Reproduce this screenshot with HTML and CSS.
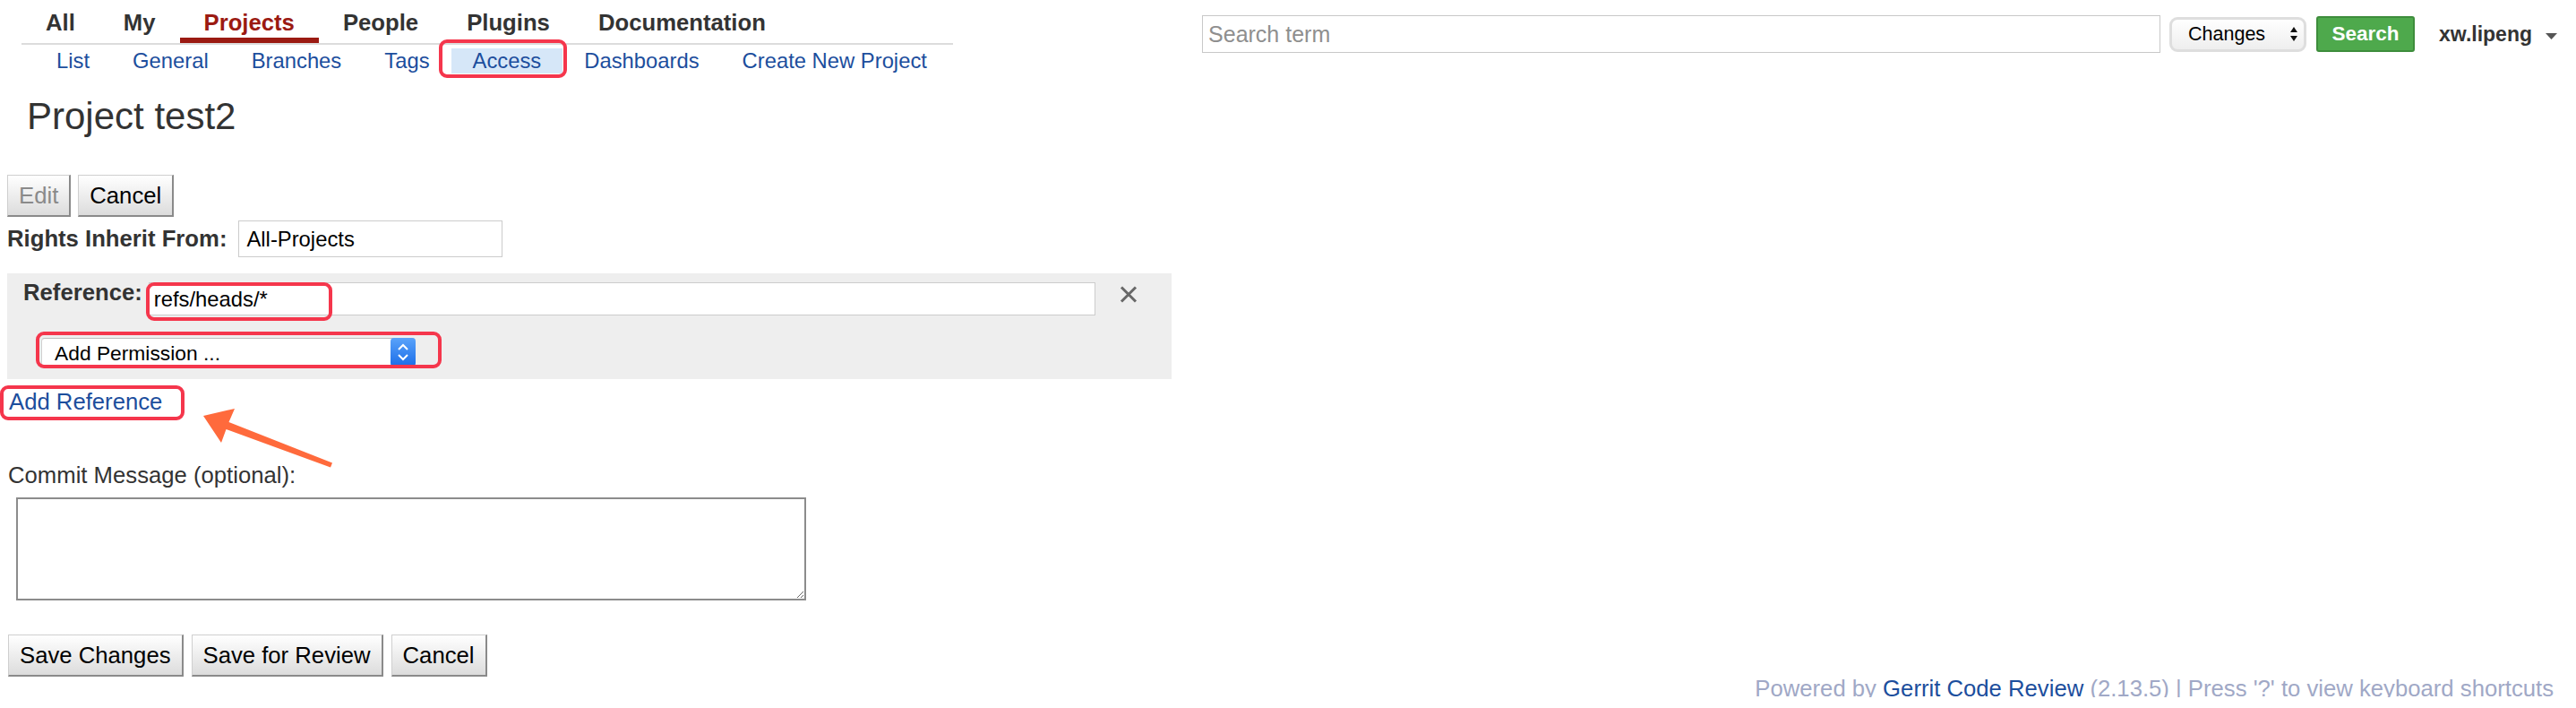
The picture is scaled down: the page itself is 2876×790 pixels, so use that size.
FILE: index.html
```html
<!DOCTYPE html>
<html lang="en">
<head>
<meta charset="utf-8">
<title>Project test2 - Access</title>
<link rel="stylesheet" href="styles.css">
</head>
<body>
<header class="topbar">
  <nav class="menus">
    <ul class="tabs">
      <li class="tab">All</li>
      <li class="tab">My</li>
      <li class="tab active">Projects</li>
      <li class="tab">People</li>
      <li class="tab">Plugins</li>
      <li class="tab">Documentation</li>
    </ul>
    <ul class="subtabs">
      <li class="subtab">List</li>
      <li class="subtab">General</li>
      <li class="subtab">Branches</li>
      <li class="subtab">Tags</li>
      <li class="subtab current">Access<span class="mark mark-access"></span></li>
      <li class="subtab">Dashboards</li>
      <li class="subtab">Create New Project</li>
    </ul>
  </nav>
  <div class="search">
    <input class="search-input" type="text" placeholder="Search term">
    <div class="scope">
      <span>Changes</span>
      <svg class="updown" width="10" height="20" viewBox="0 0 10 20"><path d="M5 2 L9 8 L1 8 Z" fill="#111"/><path d="M1 12 L9 12 L5 18 Z" fill="#111"/></svg>
    </div>
    <button class="go" type="button">Search</button>
    <span class="user">xw.lipeng</span>
    <svg class="caret" width="13" height="7" viewBox="0 0 13 7"><path d="M0 0 L13 0 L6.5 7 Z" fill="#555"/></svg>
  </div>
</header>

<main class="content">
  <h1 class="title">Project test2</h1>

  <div class="actions">
    <button class="btn" type="button" disabled>Edit</button>
    <button class="btn" type="button">Cancel</button>
  </div>

  <div class="inherit">
    <label class="inherit-label">Rights Inherit From:</label>
    <input class="inherit-input" type="text" value="All-Projects">
  </div>

  <section class="panel">
    <div class="ref-row">
      <span class="ref-label">Reference:</span>
      <div class="ref-field">
        <input class="ref-input" type="text" value="refs/heads/*">
        <span class="mark mark-ref"></span>
      </div>
      <svg class="remove" width="20" height="19" viewBox="0 0 20 19"><path d="M2 1.5 L18 17.5 M18 1.5 L2 17.5" stroke="#676767" stroke-width="3" fill="none"/></svg>
    </div>
    <div class="perm-row">
      <div class="perm-select">
        <span class="perm-text">Add Permission ...</span>
        <span class="perm-arrow"><svg width="28" height="32" viewBox="0 0 28 32"><path d="M9 13 L14 8 L19 13 M9 19 L14 24 L19 19" stroke="#fff" stroke-width="2" fill="none"/></svg></span>
      </div>
      <span class="mark mark-perm"></span>
    </div>
  </section>

  <div class="add-ref-row">
    <a class="add-ref">Add Reference<span class="mark mark-add"></span></a>
  </div>

  <div class="commit-label">Commit Message (optional):</div>
  <textarea class="commit-box"></textarea>

  <div class="actions actions-bottom">
    <button class="btn" type="button">Save Changes</button>
    <button class="btn" type="button">Save for Review</button>
    <button class="btn" type="button">Cancel</button>
  </div>
</main>

<footer class="footer">
  Powered by <a class="footer-link">Gerrit Code Review</a> (2.13.5) | Press '?' to view keyboard shortcuts
  <span class="watermark">CSDN @锦洪</span>
</footer>

<svg class="pointer" width="160" height="80" viewBox="220 450 160 80">
  <polygon points="227,464 262,456 255.5,471 371,516.5 369,521.5 252.5,479 247,494" fill="#ff6a3c"/>
</svg>
</body>
</html>
```

FILE: styles.css
```css
* { box-sizing: border-box; }

body {
  margin: 0;
  font-family: "Liberation Sans", Arial, Helvetica, sans-serif;
  font-size: 25.7px;
  color: #000;
  background: #fff;
  position: relative;
}

/* ---------- header ---------- */
.topbar {
  display: flex;
  align-items: flex-start;
}

.menus {
  margin-left: 24px;
}

.tabs {
  display: flex;
  list-style: none;
  margin: 0;
  padding: 0;
  border-bottom: 2px solid #dcdcdc;
}

.tab {
  padding: 10px 27px 2px;
  line-height: 30px;
  font-weight: bold;
  color: #333;
  border-bottom: 6px solid transparent;
}

.tab.active {
  color: #9b1a12;
  border-bottom-color: #9b1a12;
}

.subtabs {
  display: flex;
  list-style: none;
  margin: 4px 0 0;
  padding: 0 5px 0 15px;
}

.subtab {
  position: relative;
  padding: 0 24px;
  line-height: 28px;
  font-size: 23.8px;
  color: #1c4e9d;
}

.subtab.current {
  background: #d6e7f8;
}

.mark {
  position: absolute;
  border: 4px solid #f5364c;
  border-radius: 9px;
  pointer-events: none;
}

.mark-access {
  left: -14px;
  right: -5px;
  top: -10px;
  bottom: -5px;
}

.search {
  margin-left: auto;
  margin-top: 17px;
  margin-right: 21px;
  display: flex;
  align-items: center;
}

.search-input {
  width: 1070px;
  height: 42px;
  border: 1px solid #c8c8c8;
  padding: 0 6px;
  font-family: inherit;
  font-size: 25px;
  color: #000;
}

.search-input::placeholder {
  color: #8f8f8f;
}

.scope {
  margin-left: 10px;
  width: 153px;
  height: 39px;
  border: 3px solid #dedede;
  border-radius: 9px;
  background: linear-gradient(#ffffff, #eeeeee);
  display: flex;
  align-items: center;
  padding: 0 6px 0 18px;
  font-size: 21.5px;
  color: #000;
}

.updown {
  margin-left: auto;
}

.go {
  margin-left: 11px;
  width: 110px;
  height: 40px;
  background: #4ea94c;
  border: 2px solid #3e8d3c;
  border-radius: 3px;
  color: #fff;
  font-family: inherit;
  font-weight: bold;
  font-size: 22.5px;
  padding: 0;
}

.user {
  margin-left: 27px;
  font-weight: bold;
  font-size: 23px;
  color: #333;
}

.caret {
  margin-left: 15px;
  margin-top: 4px;
}

/* ---------- content ---------- */
.content {
  padding: 0 8px;
}

.title {
  margin: 23px 0 0 22px;
  font-size: 42px;
  line-height: 50px;
  font-weight: normal;
  color: #333;
}

.actions {
  margin-top: 40px;
  display: flex;
  gap: 8px;
}

.btn {
  height: 47px;
  padding: 0 12px;
  border: 1px solid #cfcfcf;
  border-right: 2px solid #8a8a8a;
  border-bottom: 2px solid #8a8a8a;
  background: linear-gradient(#ffffff, #dcdcdc);
  font-family: inherit;
  font-size: 25.7px;
  line-height: 30px;
  color: #000;
}

.btn:disabled {
  color: #8a8a8a;
}

.inherit {
  margin-top: 4px;
  display: flex;
  align-items: baseline;
  gap: 13px;
}

.inherit-label {
  font-weight: bold;
  color: #333;
}

.inherit-input {
  width: 295px;
  height: 41px;
  border: 1px solid #cccccc;
  padding: 0 8px;
  font-family: inherit;
  font-size: 23.8px;
  color: #000;
}

.panel {
  margin-top: 18px;
  width: 1300px;
  background: #eeeeee;
  padding: 10px 18px 14px;
}

.ref-row {
  display: flex;
  align-items: flex-start;
}

.ref-label {
  font-weight: bold;
  line-height: 22px;
  color: #333;
  margin-right: 7px;
}

.ref-field {
  position: relative;
}

.ref-input {
  display: block;
  width: 1057px;
  height: 37px;
  border: 1px solid #cccccc;
  padding: 0 5px;
  font-family: inherit;
  font-size: 23.8px;
  color: #000;
}

.mark-ref {
  left: -3px;
  top: 0;
  width: 208px;
  height: 43px;
}

.remove {
  margin-left: 27px;
  margin-top: 4px;
}

.perm-row {
  position: relative;
  margin: 25px 0 0 20px;
  width: 418px;
}

.perm-select {
  display: flex;
  height: 32px;
  background: #fff;
  border-top: 1px solid #bdbdbd;
  border-left: 1px solid #d0d0d0;
  border-radius: 4px;
}

.perm-text {
  flex: 1;
  padding: 1px 0 0 14px;
  line-height: 30px;
  font-size: 22.8px;
  color: #000;
}

.perm-arrow {
  width: 28px;
  height: 32px;
  margin-top: -1px;
  border-radius: 4px;
  background: linear-gradient(#5aa3fa, #1b6de8);
}

.perm-arrow svg {
  display: block;
}

.mark-perm {
  left: -6px;
  top: -7px;
  width: 453px;
  height: 41px;
}

.add-ref-row {
  margin-top: 10px;
}

.add-ref {
  position: relative;
  display: inline-block;
  margin-left: 2px;
  line-height: 30px;
  color: #1c4e9d;
}

.mark-add {
  left: -10px;
  top: -3px;
  width: 206px;
  height: 39px;
}

.commit-label {
  margin: 52px 0 0 1px;
  line-height: 30px;
  color: #333;
}

.commit-box {
  display: block;
  margin: 10px 0 0 10px;
  width: 882px;
  height: 115px;
  border: 2px solid #8c8c8c;
  resize: both;
}

.actions-bottom {
  margin-top: 38px;
  margin-left: 1px;
  gap: 9px;
}

/* ---------- footer ---------- */
.footer {
  position: relative;
  margin-top: 3px;
  padding-right: 25px;
  text-align: right;
  line-height: 20px;
  color: #a0a8c6;
}

.footer-link {
  color: #1c4e9d;
}

.watermark {
  position: absolute;
  right: 24px;
  top: 20px;
  font-size: 13px;
  line-height: 14px;
  color: rgba(90, 90, 90, 0.75);
}

.pointer {
  position: absolute;
  left: 220px;
  top: 450px;
}
```
